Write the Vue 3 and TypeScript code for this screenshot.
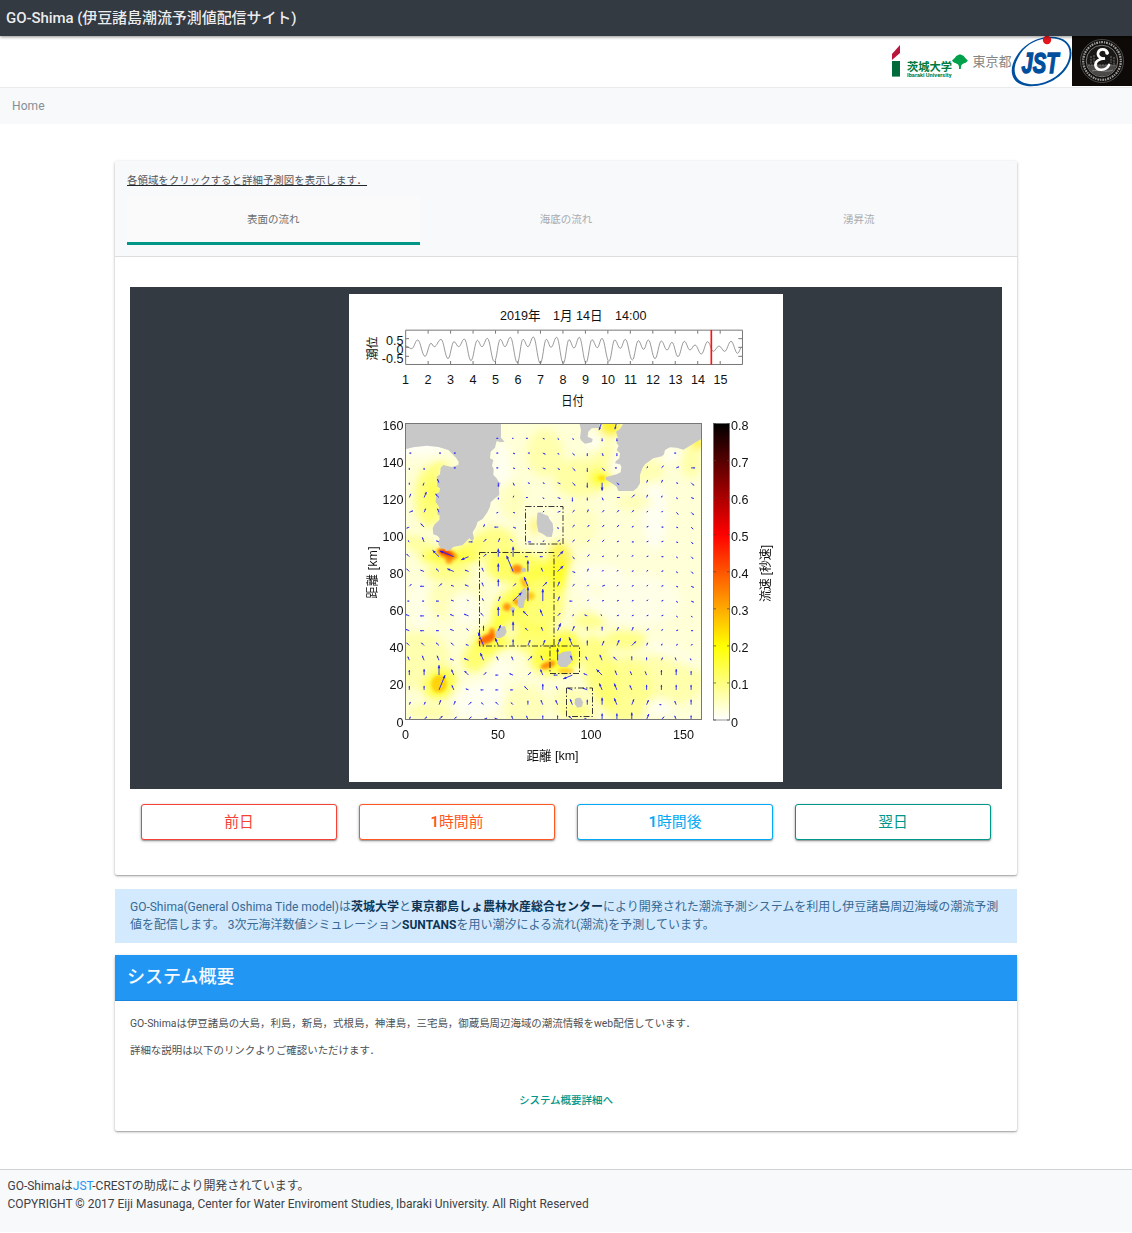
<script setup lang="ts">
interface Blob { x: number; y: number; rx: number; ry: number; c: string; o: number; a?: number }
interface Arrow { line: string; head: string }

const buttons = [
  { digit: '', label: '前日', tone: 'red' },
  { digit: '1', label: '時間前', tone: 'orange' },
  { digit: '1', label: '時間後', tone: 'sky' },
  { digit: '', label: '翌日', tone: 'teal' },
]
const tabs = ['表面の流れ', '海底の流れ', '湧昇流']

// Turning points of the tide curve, in thirds of a pixel
const tide = [
  182, 168, 200, 176, 218, 150, 240, 199, 258, 160, 268, 170, 288, 148, 309, 206, 327, 155, 341, 170, 358, 147,
  378, 212, 397, 151, 411, 170, 427, 145, 448, 215, 466, 148, 480, 170, 496, 142, 517, 218, 534, 148, 549, 170,
  565, 141, 586, 220, 604, 148, 618, 172, 635, 142, 655, 220, 672, 149, 687, 174, 703, 142, 723, 218, 741, 149,
  757, 173, 771, 145, 792, 214, 809, 150, 826, 175, 841, 148, 862, 210, 880, 152, 896, 178, 910, 150, 930, 206,
  949, 153, 966, 180, 981, 157, 999, 200, 1018, 154, 1035, 180, 1050, 165, 1069, 192, 1088, 155, 1105, 184,
  1122, 168, 1139, 184, 1158, 154, 1178, 190, 1190, 172,
]
let tidePath = `M${tide[0]} ${tide[1]}`
for (let i = 2; i < tide.length; i += 2) {
  const mx = tide[i - 2] + (tide[i] - tide[i - 2]) * 0.4
  const nx = tide[i] - (tide[i] - tide[i - 2]) * 0.4
  tidePath += `C${mx} ${tide[i - 1]} ${nx} ${tide[i + 1]} ${tide[i]} ${tide[i + 1]}`
}

const days = Array.from({ length: 15 }, (_, i) => i + 1)
const speeds = [0, 1, 2, 3, 4, 5, 6, 7, 8]
const distances = [0, 20, 40, 60, 80, 100, 120, 140, 160]

// Flow field: one pair per grid cell, direction (1/16 turns, hex) and length (px, base 36)
const field = [
  '.. .. .. .. .. .. 82 81 82 F2 E2 E2 .. C3 C3 .. .. .. .. ..',
  '02 .. 02 02 .. .. 82 F2 02 F3 E2 E3 C3 D3 C3 .. .. .. 82 ..',
  'C2 C2 .. 02 .. .. 82 F2 E2 F3 E3 E4 C4 E4 82 .. 22 23 13 04',
  'C2 B3 54 .. .. .. C4 D3 F2 F2 F3 E4 C5 C8 E3 .. 33 33 F2 E4',
  '34 36 65 .. .. .. C2 32 82 E2 F3 C4 C3 D3 03 24 33 32 E2 F3',
  '14 34 54 .. .. .. 92 F2 .. 22 13 23 33 23 23 23 22 22 E3 E4',
  '93 65 .. .. .. 33 84 F3 .. .. D2 23 23 23 23 12 12 02 F2 E3',
  '62 55 73 .. 04 24 34 64 03 22 23 23 23 23 12 02 12 12 F2 E3',
  '64 62 69 7F 98 24 48 4A 83 83 28 E3 23 12 22 22 12 02 E2 E3',
  '64 74 64 77 74 54 48 5H 4B 54 28 F3 33 22 22 12 22 12 E2 E3',
  '23 84 24 73 74 54 47 24 5A 26 35 23 22 13 22 12 22 12 F2 F3',
  '82 82 83 73 62 53 35 2C 4E 4C 35 83 22 12 12 12 22 12 E2 F3',
  '74 84 82 74 75 64 49 46 67 57 24 22 73 62 12 12 12 12 E2 E2',
  '74 84 83 74 63 45 36 49 64 54 38 35 44 44 34 34 23 22 12 02',
  '64 64 64 64 73 5E 58 46 36 36 38 59 45 35 36 26 33 32 22 22',
  '54 55 55 74 75 58 54 54 26 55 4C 55 54 56 65 44 43 33 53 52',
  '45 46 4A 56 66 24 83 74 24 56 84 9A 74 68 55 54 54 45 46 44',
  '44 44 3G 55 73 83 83 83 65 46 54 75 75 57 57 55 45 45 45 45',
  '33 33 35 34 24 63 64 63 44 55 55 56 45 47 57 36 35 82 54 45',
  '33 24 25 24 24 14 74 54 54 44 44 65 73 46 46 47 36 24 54 44',
].map((row) => row.split(' '))

const arrows: Arrow[] = []
function addArrow(x: number, y: number, angle: number, length: number) {
  const ex = x + Math.cos(angle) * length
  const ey = y - Math.sin(angle) * length
  const h = Math.min(3.4, Math.max(1.5, length * 0.42))
  const tip = (t: number) => `${(ex - Math.cos(angle + t) * h).toFixed(1)},${(ey + Math.sin(angle + t) * h).toFixed(1)}`
  arrows.push({
    line: `M${x.toFixed(1)} ${y.toFixed(1)}L${ex.toFixed(1)} ${ey.toFixed(1)}`,
    head: `${ex.toFixed(1)},${ey.toFixed(1)} ${tip(0.42)} ${tip(-0.42)}`,
  })
}
field.forEach((row, r) => {
  row.forEach((cell, c) => {
    if (cell === '..') return
    addArrow(409.3 + c * 14.83, 438.3 + r * 14.8, (parseInt(cell[0], 16) * Math.PI) / 8, parseInt(cell[1], 36))
  })
})
addArrow(601.3, 423.5, -1.9, 7)
addArrow(616.3, 423.5, -1.8, 6)

const blobs: Blob[] = [
  { x: 430, y: 497, rx: 15, ry: 30, c: '#ffff55', o: 0.7 },
  { x: 433, y: 493, rx: 5, ry: 13, c: '#ffff00', o: 0.4 },
  { x: 440, y: 466, rx: 9, ry: 4, c: '#ffff33', o: 0.7 },
  { x: 420, y: 545, rx: 18, ry: 8, c: '#ffff66', o: 0.5, a: 20 },
  { x: 418, y: 446, rx: 30, ry: 10, c: '#ffffff', o: 0.7 },
  { x: 501, y: 480, rx: 10, ry: 40, c: '#ffffff', o: 0.6 },
  { x: 545, y: 453, rx: 18, ry: 24, c: '#ffff88', o: 0.55 },
  { x: 510, y: 500, rx: 14, ry: 18, c: '#ffff99', o: 0.5 },
  { x: 495, y: 545, rx: 22, ry: 18, c: '#ffff44', o: 0.55 },
  { x: 450, y: 557, rx: 30, ry: 8, c: '#ffff00', o: 0.7 },
  { x: 470, y: 545, rx: 12, ry: 5, c: '#ffff33', o: 0.7, a: -20 },
  { x: 449, y: 573, rx: 24, ry: 8, c: '#ffff55', o: 0.6 },
  { x: 455, y: 600, rx: 30, ry: 20, c: '#ffff99', o: 0.5 },
  { x: 466, y: 608, rx: 16, ry: 16, c: '#ffffff', o: 0.65 },
  { x: 420, y: 605, rx: 10, ry: 26, c: '#ffffff', o: 0.4 },
  { x: 518, y: 568, rx: 32, ry: 16, c: '#ffff33', o: 0.7 },
  { x: 560, y: 556, rx: 12, ry: 15, c: '#ffee00', o: 0.6 },
  { x: 556, y: 570, rx: 14, ry: 10, c: '#ffff00', o: 0.6 },
  { x: 540, y: 600, rx: 24, ry: 34, c: '#ffff33', o: 0.6 },
  { x: 559, y: 580, rx: 7, ry: 12, c: '#ffff00', o: 0.7 },
  { x: 510, y: 605, rx: 24, ry: 13, c: '#ffff00', o: 0.6, a: -45 },
  { x: 500, y: 635, rx: 28, ry: 14, c: '#ffff00', o: 0.7, a: -25 },
  { x: 512, y: 632, rx: 6, ry: 7, c: '#ffffff', o: 0.7 },
  { x: 535, y: 640, rx: 22, ry: 14, c: '#ffff44', o: 0.65 },
  { x: 480, y: 655, rx: 20, ry: 14, c: '#ffff44', o: 0.7, a: -40 },
  { x: 420, y: 660, rx: 30, ry: 30, c: '#ffff88', o: 0.5 },
  { x: 440, y: 684, rx: 18, ry: 15, c: '#ffff00', o: 0.65, a: -45 },
  { x: 480, y: 700, rx: 26, ry: 18, c: '#ffffff', o: 0.65, a: -25 },
  { x: 500, y: 670, rx: 14, ry: 12, c: '#ffffff', o: 0.5 },
  { x: 525, y: 705, rx: 22, ry: 20, c: '#ffff99', o: 0.5 },
  { x: 430, y: 712, rx: 22, ry: 8, c: '#ffff99', o: 0.7 },
  { x: 552, y: 660, rx: 22, ry: 15, c: '#ffff00', o: 0.65 },
  { x: 566, y: 650, rx: 16, ry: 20, c: '#ffff00', o: 0.65 },
  { x: 570, y: 702, rx: 18, ry: 14, c: '#ffff99', o: 0.6 },
  { x: 578, y: 712, rx: 18, ry: 6, c: '#ffff55', o: 0.6 },
  { x: 600, y: 672, rx: 16, ry: 38, c: '#ffff55', o: 0.65, a: -15 },
  { x: 625, y: 640, rx: 22, ry: 10, c: '#ffff55', o: 0.6 },
  { x: 626, y: 690, rx: 26, ry: 34, c: '#ffff66', o: 0.6 },
  { x: 665, y: 680, rx: 40, ry: 26, c: '#ffff88', o: 0.55 },
  { x: 660, y: 707, rx: 13, ry: 8, c: '#ffffff', o: 0.75 },
  { x: 675, y: 655, rx: 30, ry: 5, c: '#ffffff', o: 0.6, a: 25 },
  { x: 590, y: 621, rx: 17, ry: 8, c: '#ffff66', o: 0.65 },
  { x: 595, y: 603, rx: 26, ry: 4, c: '#ffffff', o: 0.6, a: 45 },
  { x: 640, y: 600, rx: 40, ry: 26, c: '#ffffff', o: 0.4 },
  { x: 600, y: 575, rx: 24, ry: 10, c: '#ffffff', o: 0.5 },
  { x: 655, y: 515, rx: 12, ry: 35, c: '#ffffff', o: 0.65 },
  { x: 580, y: 478, rx: 26, ry: 20, c: '#ffff88', o: 0.65 },
  { x: 600, y: 478, rx: 11, ry: 9, c: '#ffff00', o: 0.75 },
  { x: 602, y: 453, rx: 10, ry: 20, c: '#ffff88', o: 0.6 },
  { x: 610, y: 427, rx: 11, ry: 9, c: '#ffee00', o: 0.85 },
  { x: 595, y: 442, rx: 9, ry: 8, c: '#ffffff', o: 0.8 },
  { x: 618, y: 465, rx: 5, ry: 9, c: '#ffffff', o: 0.8 },
  { x: 648, y: 472, rx: 16, ry: 12, c: '#ffff99', o: 0.6 },
  { x: 672, y: 455, rx: 8, ry: 6, c: '#ffffff', o: 0.8 },
  { x: 691, y: 462, rx: 10, ry: 16, c: '#ffff88', o: 0.6 },
  { x: 698, y: 443, rx: 8, ry: 6, c: '#ffee00', o: 0.8 },
  { x: 635, y: 502, rx: 18, ry: 8, c: '#ffff99', o: 0.5 },
  { x: 580, y: 525, rx: 18, ry: 22, c: '#ffffaa', o: 0.5 },
  { x: 535, y: 526, rx: 4, ry: 8, c: '#ffee44', o: 0.8 },
]
const hot: Blob[] = [
  { x: 447, y: 554, rx: 11, ry: 5, c: '#ff9900', o: 0.9, a: 20 },
  { x: 446, y: 553, rx: 8, ry: 2.6, c: '#ee1c00', o: 0.95, a: 20 },
  { x: 449, y: 560, rx: 3.5, ry: 4, c: '#ff7700', o: 0.7 },
  { x: 517, y: 569, rx: 5.5, ry: 4.5, c: '#ff7700', o: 0.85 },
  { x: 507, y: 607, rx: 4, ry: 4, c: '#ff8800', o: 0.85 },
  { x: 517, y: 602, rx: 4, ry: 3, c: '#ff8800', o: 0.85, a: 30 },
  { x: 530, y: 596, rx: 5, ry: 4, c: '#ffbb00', o: 0.75 },
  { x: 524, y: 583, rx: 2.5, ry: 6, c: '#ffaa00', o: 0.8, a: -25 },
  { x: 487, y: 639, rx: 9, ry: 4.5, c: '#ff6600', o: 0.95, a: -25 },
  { x: 492, y: 633, rx: 3, ry: 5, c: '#ff6600', o: 0.8 },
  { x: 439, y: 684, rx: 8, ry: 9, c: '#ffc800', o: 0.8, a: 10 },
  { x: 548, y: 665, rx: 8, ry: 3.5, c: '#ff8800', o: 0.9, a: -20 },
  { x: 566, y: 671, rx: 8, ry: 2.5, c: '#ffbb00', o: 0.7 },
  { x: 602, y: 478, rx: 4, ry: 2.5, c: '#ffd800', o: 0.8 },
]
</script>

<template>
  <div class="page">
    <header class="navbar">GO-Shima (伊豆諸島潮流予測値配信サイト)</header>
    <div class="logos">
      <svg class="logo-ibaraki" width="61" height="50" viewBox="0 0 61 50">
        <path d="M1 18L9 9V17L1 24Z" fill="#b8163c" />
        <rect x="1" y="25" width="8" height="15.600" fill="#006a3b" />
        <text x="16" y="34.500" font-size="11.500" font-weight="700" fill="#007a3d" textLength="45" lengthAdjust="spacingAndGlyphs">茨城大学</text>
        <text x="16" y="41" font-size="5.400" font-weight="700" fill="#007a3d" textLength="44.500" lengthAdjust="spacingAndGlyphs">Ibaraki University</text>
      </svg>
      <svg class="logo-tokyo" width="60" height="50" viewBox="0 0 60 50">
        <path d="M0 24.500C1.500 23 3 22 4 20.300C5.500 18.800 7 19.300 8 18C9 19.300 10.500 18.800 12 20.300C13 22 14.500 23 15.800 24.500C14 27.500 11.500 27 10 28.500C9 29.500 9 31 8.800 33H7C7 31 7 29.500 6 28.500C4.500 27 2 27.500 0 24.500Z" fill="#00a14a" />
        <text x="20.500" y="30" font-size="13" fill="#858585" textLength="39">東京都</text>
      </svg>
      <svg class="logo-jst" width="60" height="51" viewBox="0 0 60 51">
        <path fill-rule="evenodd" d="M34 1C52 -1 62 8 59 22C55 40 34 52 15 50C-1 48 -4 34 4 21C11 9 22 3 34 1ZM34 2.500C22 4 12 10 6 22C-1 35 3 46 17 48C34 50 53 38 57 22C60 9 51 1 34 2.500Z" fill="#004e9e" />
        <circle cx="35" cy="4" r="4.200" fill="#e3161b" />
        <text x="9.500" y="36.500" font-size="29" font-weight="700" font-style="italic" fill="#004e9e" stroke="#004e9e" stroke-width="1.400" textLength="37" lengthAdjust="spacingAndGlyphs">JST</text>
      </svg>
      <svg class="logo-seal" width="60" height="50" viewBox="0 0 60 50">
        <rect width="60" height="50" fill="#0d0a08" />
        <circle cx="30" cy="25" r="21.500" fill="none" stroke="#8d8d8d" stroke-width=".5" />
        <circle cx="30" cy="25" r="18.800" fill="none" stroke="#999" stroke-width="2.300" stroke-dasharray="1.300 .8 1.900 1" />
        <circle cx="30" cy="25" r="15.800" fill="#1a1816" stroke="#a9a9a9" stroke-width=".7" />
        <path d="M15.500 29H44.500C43 36 37 40 30 40C23 40 17 36 15.500 29Z" fill="#4c4a48" />
        <path d="M16 29H44M19 20V28M22 19V27M39 20V27M42 21V28" stroke="#8a8a8a" stroke-width=".8" stroke-dasharray="2 .8" />
        <path d="M20 35C26 33 34 37 41 34" stroke="#888" stroke-width="1" fill="none" />
        <path d="M35.500 17C34 12 27 12.500 26 17C25.500 21 29 23 33 22.500C27 22.500 23 25.500 23.500 29.500C24.500 35.500 34 35 37 29" stroke="#fff" stroke-width="2.700" fill="none" stroke-linecap="round" />
        <circle cx="35" cy="17" r="1.800" fill="#fff" />
      </svg>
    </div>
    <nav class="crumb">Home</nav>

    <main>
      <section class="card forecast">
        <div class="card-top">
          <p class="hint">各領域をクリックすると詳細予測図を表示します．</p>
          <div class="tabs">
            <div v-for="(t, i) in tabs" :key="t" class="tab" :class="{ active: i === 0 }">{{ t }}</div>
          </div>
        </div>
        <div class="stage">
          <svg class="figure" width="434" height="488" viewBox="349 294 434 488">
            <defs>
              <linearGradient id="speed" x1="0" y1="0" x2="0" y2="1">
                <stop offset="0" stop-color="#000" />
                <stop offset=".375" stop-color="#f00" />
                <stop offset=".75" stop-color="#ff0" />
                <stop offset="1" stop-color="#fff" />
              </linearGradient>
              <filter id="soft" x="-60%" y="-60%" width="220%" height="220%"><feGaussianBlur stdDeviation="4.500" /></filter>
              <filter id="tight" x="-60%" y="-60%" width="220%" height="220%"><feGaussianBlur stdDeviation="1.700" /></filter>
              <clipPath id="sea"><rect x="405.500" y="423.500" width="296" height="296" /></clipPath>
            </defs>
            <rect x="349" y="294" width="434" height="488" fill="#fff" />

            <text x="500" y="320" textLength="146.500" lengthAdjust="spacingAndGlyphs" xml:space="preserve">2019年　1月 14日　14:00</text>
            <g transform="translate(345 290) scale(.33333)" fill="none">
              <path d="M182 120.500H1192.500V223.500H182Z" stroke="#777" stroke-width="3" />
              <path :d="tidePath" stroke="#666" stroke-width="2" />
              <path d="M182 146H192M182 172H192M182 199H192M1180 146H1192M1180 172H1192M1180 199H1192" stroke="#777" stroke-width="3" />
              <path v-for="d in days.slice(1)" :key="d" :d="`M${182 + (d - 1) * 67.4} 121v10m0 92v-10`" stroke="#777" stroke-width="3" />
              <path d="M1099 120V224" stroke="#f11" stroke-width="5" />
            </g>
            <g text-anchor="end">
              <text x="403.500" y="344.500">0.5</text>
              <text x="403.500" y="353.500">0</text>
              <text x="403.500" y="363">-0.5</text>
            </g>
            <text class="turned" transform="translate(376.500 348.500) rotate(-90)">潮位</text>
            <g text-anchor="middle">
              <text v-for="d in days" :key="d" :x="405.500 + (d - 1) * 22.500" y="383.500">{{ d }}</text>
              <text x="572.500" y="405" textLength="22.500" lengthAdjust="spacingAndGlyphs">日付</text>
            </g>

            <g clip-path="url(#sea)">
              <rect x="405" y="423" width="297" height="297" fill="#ffffd8" />
              <g filter="url(#soft)">
                <ellipse v-for="(b, i) in blobs" :key="i" :cx="b.x" :cy="b.y" :rx="b.rx" :ry="b.ry" :fill="b.c" :opacity="b.o" :transform="`rotate(${b.a || 0} ${b.x} ${b.y})`" />
              </g>
              <g filter="url(#tight)">
                <ellipse v-for="(b, i) in hot" :key="i" :cx="b.x" :cy="b.y" :rx="b.rx" :ry="b.ry" :fill="b.c" :opacity="b.o" :transform="`rotate(${b.a || 0} ${b.x} ${b.y})`" />
              </g>
              <g transform="translate(400 415) scale(.33333)" fill="#c8c8c8">
                <path d="M15 22H303V68L314 80L302 82L290 78L285 98L272 110L270 130L280 135L276 152L281 162L280 180L290 190L296 200L302 204L297 220L298 240L285 250L272 262L270 275L262 292L248 312L233 320L228 335L218 352L222 370L217 379L208 370L188 390L160 396L150 406L138 408L132 400L122 400L115 388L119 370L112 362L100 358L98 340L104 328L118 315L119 302L112 298L114 285L118 280L114 270L107 262L109 235L118 232L120 220L112 215L110 185L120 178L122 158L130 150L155 156L175 150L176 140L168 128L145 105L115 96L80 92L40 97L15 103Z" />
                <path d="M538 22H598L600 38L575 40L565 50L563 65L578 72L576 82L555 86L545 78L540 70L543 45Z" />
                <path d="M672 22H907V70L850 104L830 98L810 97L795 105L792 118L786 124L760 130L735 148L727 160L720 180L720 205L712 218L700 228L655 228L650 215L640 208L618 194L618 186L650 178L662 172L664 155L660 148L645 145L648 138L658 130L660 115L650 105L656 92L650 85L653 65L648 50L660 42Z" />
                <path d="M412 293L420 292L430 297L445 303L448 312L458 325L460 345L455 366L440 365L430 358L415 350L410 325Z" />
                <circle cx="372" cy="465" r="7" />
                <circle cx="338" cy="583" r="7" />
                <path d="M362 528L374 518L380 530L380 550L374 558L371 578L358 580L352 568L356 545Z" />
                <path d="M288 650L298 636L315 633L320 650L314 662L300 670L288 668Z" />
                <path d="M473 720L490 710L512 708L518 725L514 742L500 756L482 756L472 746Z" />
                <path d="M532 848L542 849L549 862L546 875L532 878L524 866L525 852Z" />
              </g>
              <g fill="#11f" stroke="#22f" stroke-width="1" opacity=".9">
                <template v-for="(a, i) in arrows" :key="i">
                  <path :d="a.line" />
                  <polygon :points="a.head" stroke="none" />
                </template>
              </g>
            </g>
            <g fill="none" stroke="#222" stroke-width=".9" stroke-dasharray="6 2 1.500 2">
              <rect x="525.500" y="506.500" width="37.500" height="37.500" />
              <rect x="479.500" y="552.500" width="74.500" height="93.500" />
              <rect x="550" y="646" width="29.500" height="27.500" />
              <rect x="566.500" y="688" width="26" height="28.500" />
            </g>
            <rect x="405.500" y="423.500" width="296" height="296" fill="none" stroke="#777" />

            <rect x="713.500" y="423.500" width="16" height="296.500" fill="url(#speed)" stroke="#666" stroke-width=".7" />
            <path v-for="s in speeds" :key="s" :d="`M713.500 ${720 - s * 37.060}h2.500m11 0h2.500`" stroke="#444" stroke-width=".7" />
            <text v-for="s in speeds" :key="'t' + s" x="731" :y="726.500 - s * 37.060">{{ s ? '0.' + s : '0' }}</text>
            <g text-anchor="end">
              <text v-for="d in distances" :key="d" x="403.500" :y="726.500 - d * 1.856">{{ d }}</text>
            </g>
            <g text-anchor="middle">
              <text x="405.500" y="739">0</text>
              <text x="498" y="739">50</text>
              <text x="591" y="739">100</text>
              <text x="683.500" y="739">150</text>
              <text x="552.500" y="760" textLength="52" lengthAdjust="spacingAndGlyphs">距離 [km]</text>
            </g>
            <text class="turned" transform="translate(376.500 572.500) rotate(-90)" textLength="52">距離 [km]</text>
            <text class="turned" transform="translate(770 573.500) rotate(-90)" textLength="57">流速 [秒速]</text>
          </svg>
        </div>
        <div class="actions">
          <button v-for="b in buttons" :key="b.label" :class="b.tone"><b v-if="b.digit">{{ b.digit }}</b>{{ b.label }}</button>
        </div>
      </section>

      <div class="alert">GO-Shima(General Oshima Tide model)は<b>茨城大学</b>と<b>東京都島しょ農林水産総合センター</b>により開発された潮流予測システムを利用し伊豆諸島周辺海域の潮流予測<br>値を配信します。 3次元海洋数値シミュレーション<b>SUNTANS</b>を用い潮汐による流れ(潮流)を予測しています。</div>

      <section class="card about">
        <h2>システム概要</h2>
        <p>GO-Shimaは伊豆諸島の大島，利島，新島，式根島，神津島，三宅島，御蔵島周辺海域の潮流情報をweb配信しています．</p>
        <p>詳細な説明は以下のリンクよりご確認いただけます．</p>
        <a class="more">システム概要詳細へ</a>
      </section>
    </main>

    <footer>
      <div>GO-Shimaは<a>JST</a>-CRESTの助成により開発されています。</div>
      <div>COPYRIGHT © 2017 Eiji Masunaga, Center for Water Enviroment Studies, Ibaraki University. All Right Reserved</div>
    </footer>
  </div>
</template>

<style>
body { margin: 0; background: #fff; }
</style>

<style scoped>
.page, .page * { box-sizing: border-box; }
.page { width: 1132px; height: 1233px; overflow: hidden; font-family: Roboto, "Noto Sans CJK JP", sans-serif; color: #212529; }
.navbar { position: relative; height: 36px; padding-left: 6px; background: #343a42; color: rgba(255, 255, 255, .92); font-size: 15px; font-weight: 500; line-height: 36px; letter-spacing: -.07px; box-shadow: 0 1px 3px rgba(0, 0, 0, .45); white-space: nowrap; }
.logos { height: 51px; display: flex; justify-content: flex-end; }
.logos svg { display: block; flex: none; overflow: visible; }
.logos text { font-family: Roboto, "Noto Sans CJK JP", sans-serif; }
.logos .logo-jst text { font-family: "Liberation Sans", sans-serif; }
.crumb { height: 37px; padding-left: 12px; border-top: 1px solid #e9eaeb; background: #f8f9fb; color: #868e96; font-size: 12px; line-height: 36px; letter-spacing: .1px; }
main { width: 902px; margin: 37px auto 0; }
.card { background: #fff; border-radius: 2px; box-shadow: 0 1px 3px rgba(0, 0, 0, .3), 0 1px 1px rgba(0, 0, 0, .15); }
.forecast { height: 714px; }
.card-top { height: 96px; padding: 12px 12px 11px; border-bottom: 1px solid #dcdddf; background: #f8f9fb; border-radius: 2px 2px 0 0; }
.hint { width: max-content; margin: 0; font-size: 10.460px; line-height: 16px; color: #51565b; text-decoration: underline; text-decoration-color: #212529; text-underline-offset: 1px; }
.tabs { display: flex; margin-top: 6px; }
.tab { width: 292.670px; height: 50px; color: #a9acae; font-size: 10.500px; line-height: 50px; text-align: center; }
.tab.active { border-bottom: 3px solid #009688; background: #fafafa; color: #6c6f70; }
.stage { display: flex; justify-content: center; width: 872px; height: 502px; margin: 30px 15px 0; padding-top: 7px; background: #343a42; }
.figure { display: block; }
.figure text { font-family: "Liberation Sans", "Noto Sans CJK JP", sans-serif; font-size: 12.600px; fill: #111; }
.figure text.turned { font-size: 12px; text-anchor: middle; }
.actions { display: flex; gap: 22px; padding: 15px 26px 0; }
.actions button { width: 196px; height: 36px; padding: 0; border: 1px solid; border-radius: 3px; background: #fff; font: 400 14.800px/32px Roboto, "Noto Sans CJK JP", sans-serif; box-shadow: 0 1px 3px rgba(0, 0, 0, .35), 0 1px 1px rgba(0, 0, 0, .2); }
.actions b { font-weight: 600; }
.red { color: #f44336; }
.orange { color: #ff5722; }
.sky { color: #03a9f4; }
.teal { color: #009688; }
.alert { height: 54px; margin-top: 14px; padding: 9px 15px; background: #d3e9fd; color: #376a95; font-size: 12px; line-height: 18px; white-space: nowrap; }
.alert b { color: #0c3556; }
.about { height: 176px; margin-top: 12px; }
.about h2 { height: 46px; margin: 0 0 15px; padding-left: 12px; border-bottom: 1px solid #1a85dc; background: #2196f3; color: #f3f9fe; font-size: 18px; font-weight: 500; line-height: 44px; }
.about p { margin: 0 0 11px 15px; color: #4c5054; font-size: 10.450px; line-height: 16px; white-space: nowrap; }
.more { display: block; margin-top: 34px; color: #009688; font-size: 10.500px; font-weight: 500; line-height: 16px; text-align: center; }
footer { height: 63px; margin-top: 38px; padding: 7px 7.500px; border-top: 1px solid #cfd3d7; background: #f8f9fb; color: #3d4145; font-size: 11.980px; line-height: 18px; white-space: nowrap; }
footer a { color: #2196f3; }
</style>
